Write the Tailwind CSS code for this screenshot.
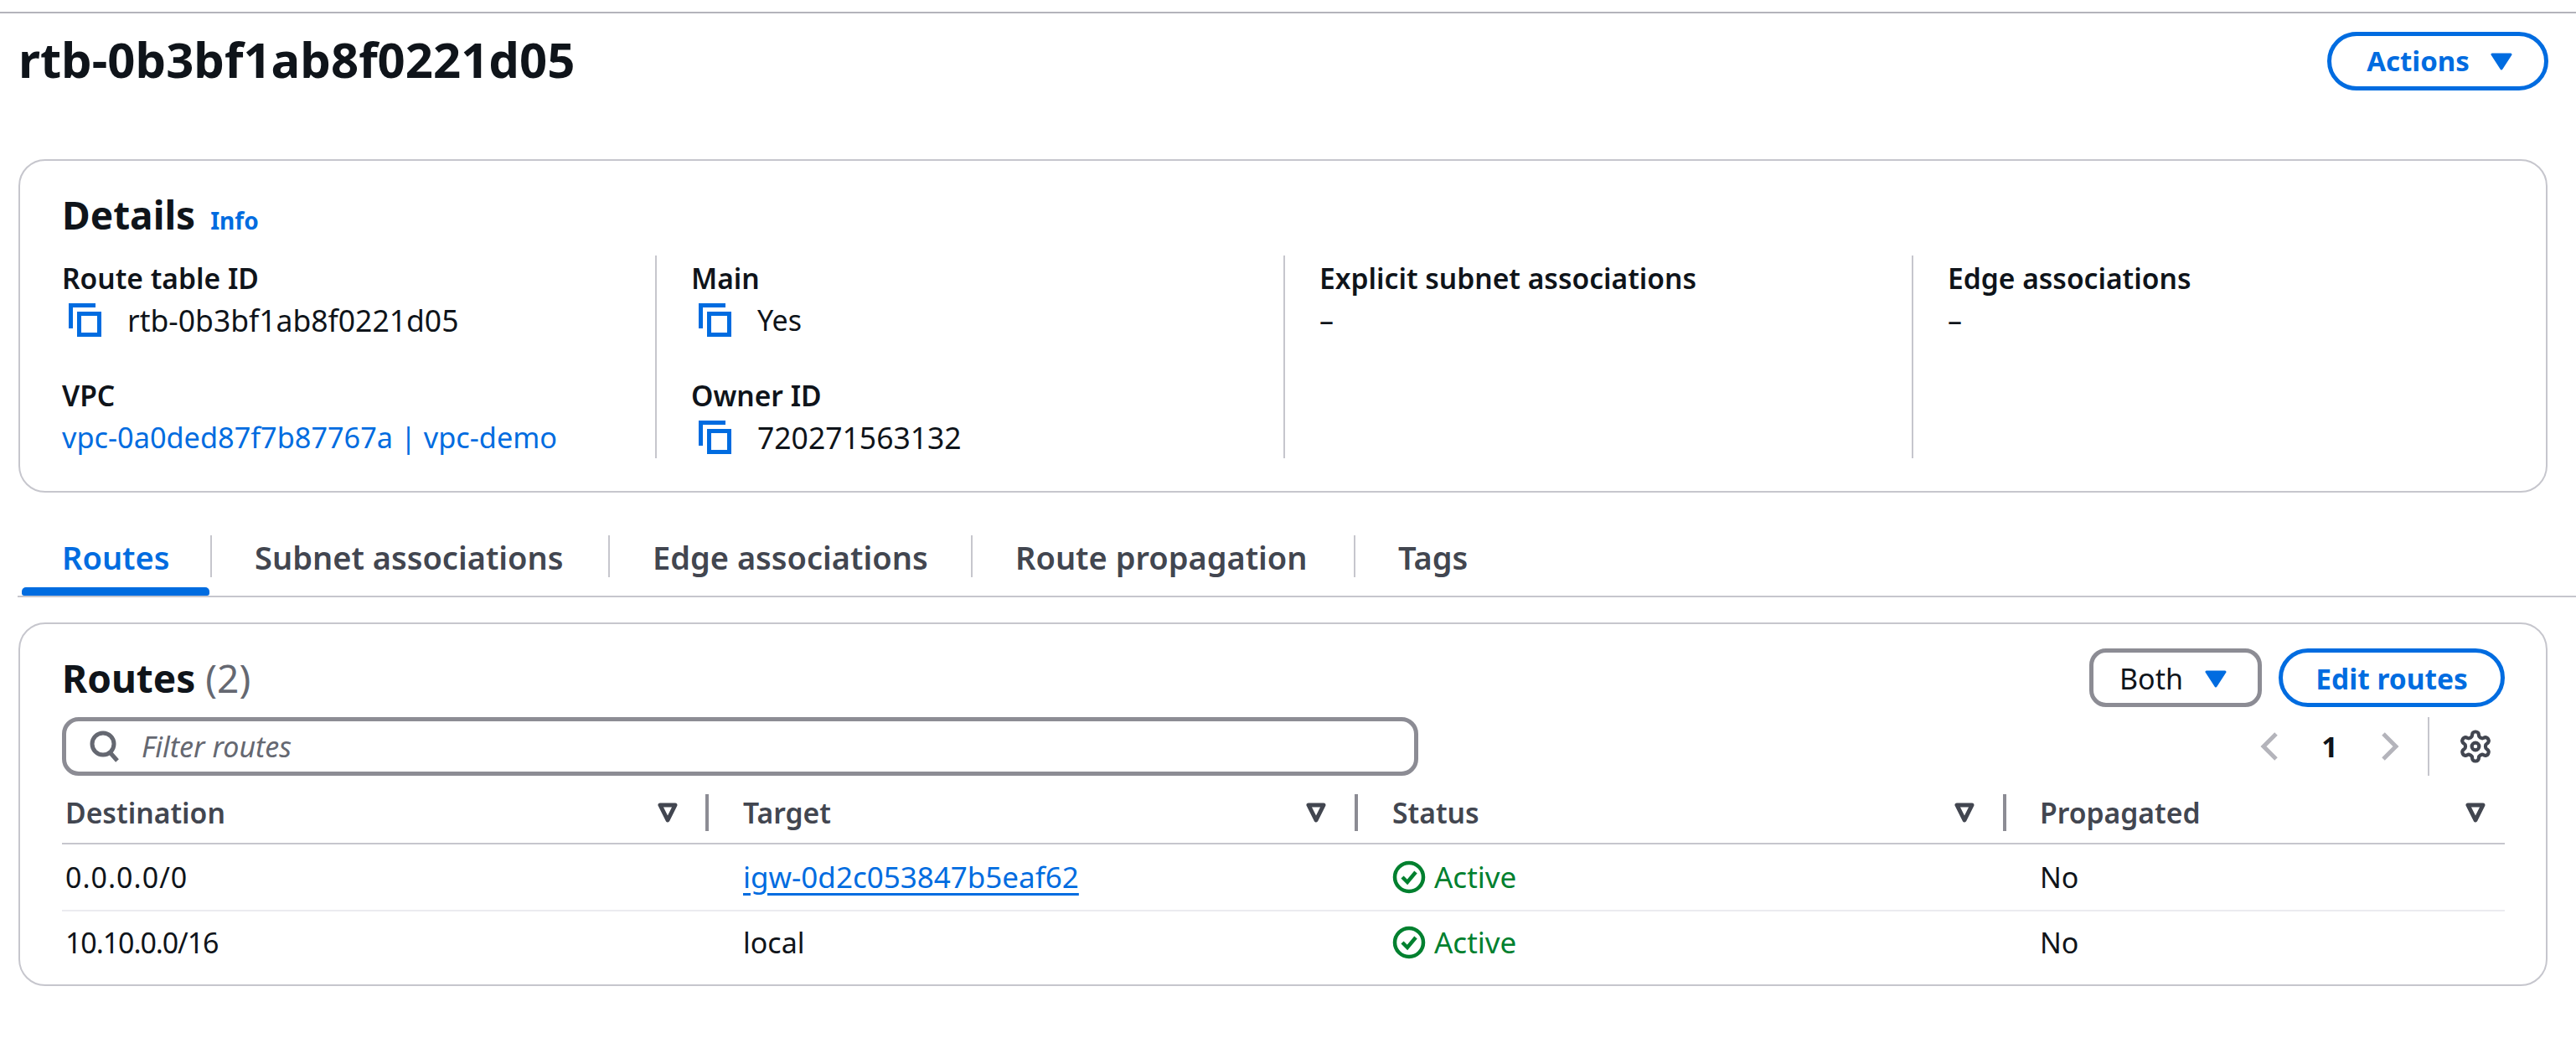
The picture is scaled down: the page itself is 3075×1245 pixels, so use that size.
<!DOCTYPE html>
<html>
<head>
    <meta charset="UTF-8">
    <title>rtb-0b3bf1ab8f0221d05</title>
    <script src="https://cdn.jsdelivr.net/npm/@tailwindcss/browser@4"></script>
</head>
<body class="bg-white text-[#0f141a] font-['Noto_Sans',sans-serif] text-[34px] leading-[44px] w-[3075px] h-[1245px] overflow-hidden">
    <div class="h-[14px]"></div>
    <div class="h-[2px] bg-[#b4b4bb]"></div>

    <!-- header -->
    <div class="flex items-start justify-between pl-[22px] pr-[33px] h-[174px]">
        <h1 class="text-[58px] font-bold leading-[80px] mt-[15px]">rtb-0b3bf1ab8f0221d05</h1>
        <button class="mt-[22px] w-[264px] h-[70px] rounded-full border-[5px] border-[#006ce0] text-[#006ce0] text-[33px] font-bold flex items-center justify-center gap-[25px] pl-[4px]">
            Actions
            <svg width="26" height="21" viewBox="0 0 26 21"><path d="M2 2h22L13 19z" fill="#006ce0" stroke="#006ce0" stroke-width="3" stroke-linejoin="round"/></svg>
        </button>
    </div>

    <!-- details -->
    <section class="mx-[22px] w-[3019px] h-[398px] rounded-[32px] border-2 border-[#c6c6cd] pl-[50px] pt-[34px]">
        <div class="flex items-baseline gap-[18px] h-[79px]">
            <h2 class="text-[46px] font-bold leading-[60px]">Details</h2>
            <a class="text-[28px] font-bold text-[#006ce0]">Info</a>
        </div>
        <div class="grid grid-cols-[710px_750px_750px_700px]">
            <div class="border-r-2 border-[#c6c6cd] h-[242px] pt-[5px]">
                <div class="font-semibold text-[33.6px]">Route table ID</div>
                <div class="flex items-center gap-[30px] pl-[8px] mt-[6px] h-[44px]">
                    <svg width="40" height="40" viewBox="0 0 40 40" fill="none" stroke="#006ce0" stroke-width="5"><path d="M2.5 30V2.5H32"/><rect x="12.5" y="12.5" width="24" height="25"/></svg>
                    <span class="text-[35.5px]">rtb-0b3bf1ab8f0221d05</span>
                </div>
                <div class="font-semibold text-[33.6px] mt-[46px]">VPC</div>
                <div class="text-[#006ce0] text-[34.3px] mt-[6px]">vpc-0a0ded87f7b87767a | vpc-demo</div>
            </div>
            <div class="border-r-2 border-[#c6c6cd] pl-[41px] pt-[5px]">
                <div class="font-semibold text-[33.6px]">Main</div>
                <div class="flex items-center gap-[30px] pl-[9px] mt-[6px] h-[44px]">
                    <svg width="40" height="40" viewBox="0 0 40 40" fill="none" stroke="#006ce0" stroke-width="5"><path d="M2.5 30V2.5H32"/><rect x="12.5" y="12.5" width="24" height="25"/></svg>
                    <span>Yes</span>
                </div>
                <div class="font-semibold text-[33.6px] mt-[46px]">Owner ID</div>
                <div class="flex items-center gap-[30px] pl-[9px] mt-[6px] h-[44px]">
                    <svg width="40" height="40" viewBox="0 0 40 40" fill="none" stroke="#006ce0" stroke-width="5"><path d="M2.5 30V2.5H32"/><rect x="12.5" y="12.5" width="24" height="25"/></svg>
                    <span class="text-[35.5px]">720271563132</span>
                </div>
            </div>
            <div class="border-r-2 border-[#c6c6cd] pl-[41px] pt-[5px]">
                <div class="font-semibold text-[33.6px]">Explicit subnet associations</div>
                <div class="mt-[6px]">–</div>
            </div>
            <div class="pl-[41px] pt-[5px]">
                <div class="font-semibold text-[33.6px]">Edge associations</div>
                <div class="mt-[6px]">–</div>
            </div>
        </div>
    </section>

    <!-- tabs -->
    <div class="mt-[51px] ml-[21px] h-[74px] border-b-2 border-[#c6c6cd] flex items-start text-[38px] font-semibold text-[#424650] relative">
        <div class="w-[230px] h-[72px] pl-[53px] text-[#006ce0] leading-[52px] relative">
            Routes
            <div class="absolute left-[5px] top-[62px] w-[224px] h-[10px] rounded-t-[5px] rounded-b-[3px] bg-[#006ce0]"></div>
        </div>
        <div class="w-[475px] h-[50px] border-l-2 border-[#c6c6cd] pl-[51px] leading-[52px]">Subnet associations</div>
        <div class="w-[433px] h-[50px] border-l-2 border-[#c6c6cd] pl-[51px] leading-[52px]">Edge associations</div>
        <div class="w-[457px] h-[50px] border-l-2 border-[#c6c6cd] pl-[51px] leading-[52px]">Route propagation</div>
        <div class="h-[50px] border-l-2 border-[#c6c6cd] pl-[51px] leading-[52px]">Tags</div>
    </div>

    <!-- routes -->
    <section class="mt-[30px] mx-[22px] w-[3019px] h-[434px] rounded-[32px] border-2 border-[#c6c6cd] pl-[50px] pr-[49px] pt-[29px]">
        <div class="flex justify-between items-start h-[82px]">
            <h2 class="text-[46px] font-bold leading-[62px] mt-[4px]">Routes <span class="font-normal text-[#656871]">(2)</span></h2>
            <div class="flex gap-[20px]">
                <button class="w-[206px] h-[70px] rounded-[20px] border-[5px] border-[#8c8c94] flex items-center justify-center gap-[26px] pr-[6px] pt-[2px]">
                    Both
                    <svg width="26" height="21" viewBox="0 0 26 21"><path d="M2 2h22L13 19z" fill="#006ce0" stroke="#006ce0" stroke-width="3" stroke-linejoin="round"/></svg>
                </button>
                <button class="w-[270px] h-[70px] rounded-full border-[5px] border-[#006ce0] text-[#006ce0] text-[33.5px] font-bold flex items-center justify-center pt-[2px]">Edit routes</button>
            </div>
        </div>
        <div class="flex justify-between items-center h-[70px]">
            <div class="w-[1619px] h-[70px] rounded-[20px] border-[5px] border-[#8c8c94] flex items-center pl-[28px] gap-[26px]">
                <svg width="36" height="38" viewBox="0 0 36 38" fill="none" stroke="#656871" stroke-width="5" class="shrink-0"><circle cx="16" cy="16" r="13"/><path d="M25 27l8 9"/></svg>
                <span class="italic text-[#656871]">Filter routes</span>
            </div>
            <div class="flex items-center h-[70px]">
                <svg width="22" height="34" viewBox="0 0 22 34" fill="none" stroke="#b4b4bb" stroke-width="5"><path d="M19 2L4 17l15 15"/></svg>
                <span class="font-bold w-[122px] text-center">1</span>
                <svg width="22" height="34" viewBox="0 0 22 34" fill="none" stroke="#b4b4bb" stroke-width="5"><path d="M3 2l15 15L3 32"/></svg>
                <div class="w-[2px] h-[70px] bg-[#c6c6cd] ml-[34px]"></div>
                <svg width="42" height="42" viewBox="0 0 24 24" fill="none" stroke="#424650" stroke-width="2.4" class="ml-[34px] mr-[14px]"><path d="M12.22 2h-.44a2 2 0 0 0-2 2v.18a2 2 0 0 1-1 1.73l-.43.25a2 2 0 0 1-2 0l-.15-.08a2 2 0 0 0-2.73.73l-.22.38a2 2 0 0 0 .73 2.73l.15.1a2 2 0 0 1 1 1.72v.51a2 2 0 0 1-1 1.74l-.15.09a2 2 0 0 0-.73 2.73l.22.38a2 2 0 0 0 2.73.73l.15-.08a2 2 0 0 1 2 0l.43.25a2 2 0 0 1 1 1.73V20a2 2 0 0 0 2 2h.44a2 2 0 0 0 2-2v-.18a2 2 0 0 1 1-1.73l.43-.25a2 2 0 0 1 2 0l.15.08a2 2 0 0 0 2.73-.73l.22-.39a2 2 0 0 0-.73-2.73l-.15-.08a2 2 0 0 1-1-1.74v-.5a2 2 0 0 1 1-1.74l.15-.09a2 2 0 0 0 .73-2.73l-.22-.38a2 2 0 0 0-2.73-.73l-.15.08a2 2 0 0 1-2 0l-.43-.25a2 2 0 0 1-1-1.73V4a2 2 0 0 0-2-2z"/><circle cx="12" cy="12" r="2.5"/></svg>
            </div>
        </div>

        <!-- table -->
        <div class="grid grid-cols-[772px_775px_774px_595px] mt-[22px]">
            <div class="flex items-center h-[60px] pl-[4px] pb-[14px] border-b-2 border-[#c6c6cd] font-semibold text-[33.7px] text-[#424650]">
                <span class="flex-1">Destination</span>
                <svg width="24" height="24" viewBox="0 0 24 24" fill="none" stroke="#424650" stroke-width="5" stroke-linejoin="round"><path d="M3 3h18L12 21z"/></svg>
                <div class="w-[4px] h-[44px] bg-[#8c8c94] ml-[33px]"></div>
            </div>
            <div class="flex items-center h-[60px] pl-[41px] pb-[14px] border-b-2 border-[#c6c6cd] font-semibold text-[33.7px] text-[#424650]">
                <span class="flex-1">Target</span>
                <svg width="24" height="24" viewBox="0 0 24 24" fill="none" stroke="#424650" stroke-width="5" stroke-linejoin="round"><path d="M3 3h18L12 21z"/></svg>
                <div class="w-[4px] h-[44px] bg-[#8c8c94] ml-[34px]"></div>
            </div>
            <div class="flex items-center h-[60px] pl-[41px] pb-[14px] border-b-2 border-[#c6c6cd] font-semibold text-[33.7px] text-[#424650]">
                <span class="flex-1">Status</span>
                <svg width="24" height="24" viewBox="0 0 24 24" fill="none" stroke="#424650" stroke-width="5" stroke-linejoin="round"><path d="M3 3h18L12 21z"/></svg>
                <div class="w-[4px] h-[44px] bg-[#8c8c94] ml-[34px]"></div>
            </div>
            <div class="flex items-center h-[60px] pl-[40px] pr-[23px] pb-[14px] border-b-2 border-[#c6c6cd] font-semibold text-[33.7px] text-[#424650]">
                <span class="flex-1">Propagated</span>
                <svg width="24" height="24" viewBox="0 0 24 24" fill="none" stroke="#424650" stroke-width="5" stroke-linejoin="round"><path d="M3 3h18L12 21z"/></svg>
            </div>

            <div class="flex items-center h-[80px] pl-[4px] border-b-2 border-[#ebebf0] tracking-[1px]">0.0.0.0/0</div>
            <div class="flex items-center h-[80px] pl-[41px] border-b-2 border-[#ebebf0]"><a class="text-[#006ce0] text-[35px] underline decoration-[3px] underline-offset-[6px]">igw-0d2c053847b5eaf62</a></div>
            <div class="flex items-center h-[80px] pl-[41px] border-b-2 border-[#ebebf0] gap-[10px] text-[#00802f] text-[35px]">
                <svg width="40" height="40" viewBox="0 0 40 40" fill="none" stroke="#00802f" stroke-width="4.5"><circle cx="20" cy="20" r="17"/><path d="M12 20l6 6 10-12"/></svg>
                Active
            </div>
            <div class="flex items-center h-[80px] pl-[40px] border-b-2 border-[#ebebf0]">No</div>

            <div class="flex items-center h-[74px] pl-[4px] tracking-[-1.1px]">10.10.0.0/16</div>
            <div class="flex items-center h-[74px] pl-[41px]">local</div>
            <div class="flex items-center h-[74px] pl-[41px] gap-[10px] text-[#00802f] text-[35px]">
                <svg width="40" height="40" viewBox="0 0 40 40" fill="none" stroke="#00802f" stroke-width="4.5"><circle cx="20" cy="20" r="17"/><path d="M12 20l6 6 10-12"/></svg>
                Active
            </div>
            <div class="flex items-center h-[74px] pl-[40px]">No</div>
        </div>
    </section>
</body>
</html>
